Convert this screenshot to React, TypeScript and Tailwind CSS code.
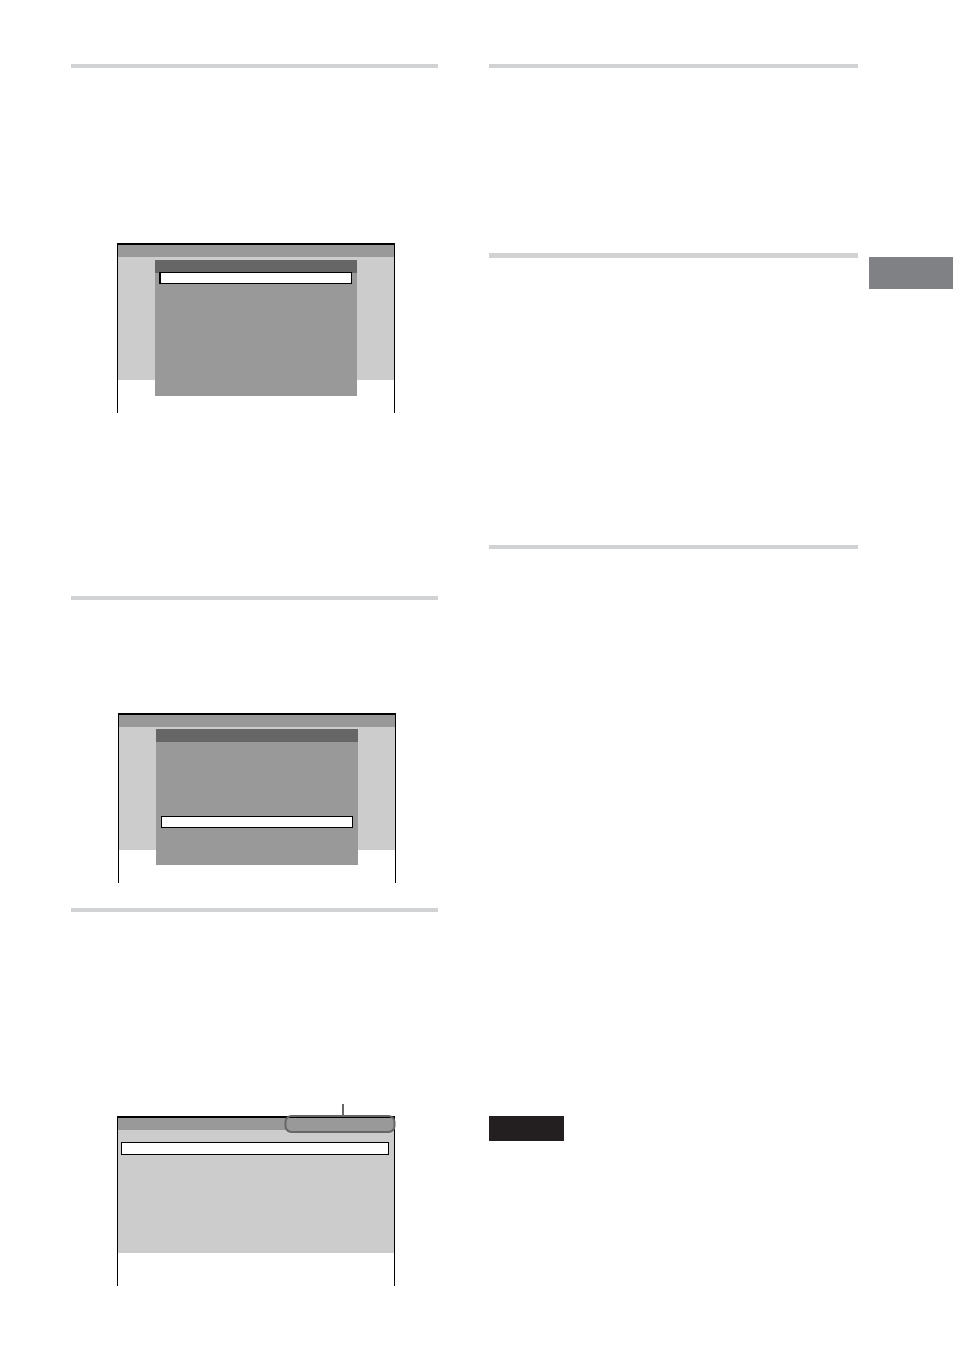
import type { ReactNode } from 'react';
import clsx from 'clsx';

interface ScreenProps {
  className?: string;
  bodyClassName?: string;
  callout?: ReactNode;
  children: ReactNode;
}

// TV screen outline, open at the bottom
function Screen({ className, bodyClassName, callout, children }: ScreenProps) {
  return (
    <div className={clsx('relative w-[278px] h-[170px] border-x border-t-2 border-black', className)}>
      <div className="h-3 bg-[#999999]" />
      <div className={clsx('h-[123px] bg-[#cccccc]', bodyClassName)}>{children}</div>
      {callout}
    </div>
  );
}

function Menu({ children }: { children: ReactNode }) {
  return (
    <div className="h-[136px] bg-[#999999]">
      <div className="h-[13px] bg-[#666666]" />
      {children}
    </div>
  );
}

// Rounded marker around the right part of the title bar
function Callout() {
  return (
    <svg
      className="absolute -top-3.5 -right-0.5"
      width="112"
      height="30"
      viewBox="0 0 112 30"
      fill="none"
      aria-hidden="true"
    >
      <path d="M2 14H110V22Q110 28 104 28H8Q2 28 2 22Z" fill="#999999" />
      <rect x="1.5" y="12" width="109" height="16" rx="6" stroke="#666666" strokeWidth="2" />
      <path d="M8 13.5H104" stroke="#000000" />
      <path d="M59 0V11" stroke="#666666" strokeWidth="2" />
    </svg>
  );
}

export default function App() {
  return (
    <main className="flex min-h-screen items-start bg-white pt-16 pr-px pl-[71px]">
      <div className="grid flex-1 grid-cols-[367fr_369fr] gap-x-[51px]">
        {/* Left column */}
        <div>
          <section className="h-[532px] border-t-4 border-[#d1d2d3] pt-[175px]">
            <Screen className="ml-[46px]" bodyClassName="px-[37px] pt-[3px]">
              <Menu>
                <div className="-mt-px mr-[5px] ml-1 h-3 border border-l-2 border-black bg-white" />
              </Menu>
            </Screen>
          </section>

          <section className="h-[312px] border-t-4 border-[#d1d2d3] pt-[113px]">
            <Screen className="ml-[47px]" bodyClassName="px-[37px] pt-0.5">
              <Menu>
                <div className="mx-[5px] mt-[74px] h-3 border border-black bg-white" />
              </Menu>
            </Screen>
          </section>

          <section className="border-t-4 border-[#d1d2d3] pt-[204px] pb-16">
            <Screen className="ml-[46px]" bodyClassName="pt-3 pr-[5px] pl-[3px]" callout={<Callout />}>
              <div className="h-[13px] border border-black bg-white" />
            </Screen>
          </section>
        </div>

        {/* Right column */}
        <div>
          <section className="h-[189px] border-t-4 border-[#d1d2d3]" />
          <section className="h-[292px] border-t-5 border-[#d1d2d3]" />
          <section className="border-t-4 border-[#d1d2d3] pt-[567px]">
            <div className="h-[25px] w-[75px] bg-[#231f20]" />
          </section>
        </div>
      </div>

      {/* Page tab */}
      <aside className="mt-[193px] ml-[11px] h-8 w-[84px] bg-[#808184]" />
    </main>
  );
}
